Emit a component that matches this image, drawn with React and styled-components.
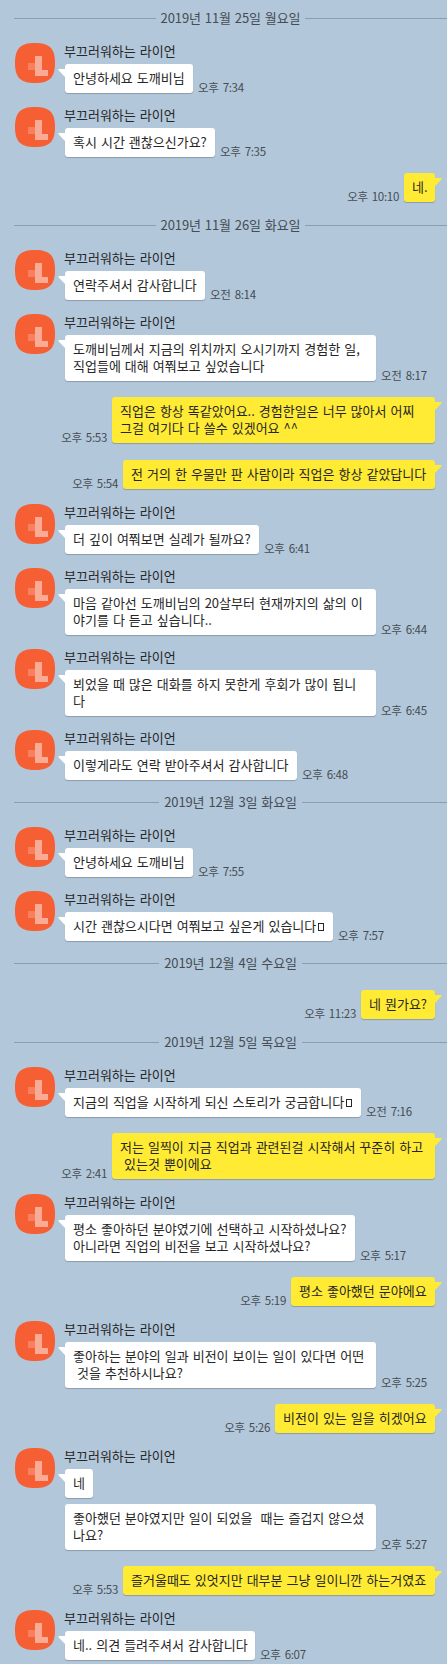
import React from "react";
import { styled, createGlobalStyle } from "styled-components";

const GlobalStyle = createGlobalStyle`
  body {
    margin: 0;
    background-color: #b2c7da;
    font-family: "Noto Sans CJK KR", sans-serif;
  }
`;

const ChatRoom = styled.div`
  box-sizing: border-box;
  width: 447px;
  height: 1664px;
  padding-top: 10px;
  overflow: hidden;
  background-color: #b2c7da;
  color: #262626;
  font-size: 13px;
  line-height: 17px;
  word-spacing: 1.1px;
`;

const DateLine = styled.div`
  display: flex;
  align-items: center;
  gap: 5px;
  height: 17px;
  margin: 0 0 16px 14px;
  color: #464c52;
  letter-spacing: -0.1px;
  white-space: pre;

  > span {
    padding-bottom: 2px;
  }

  &::before,
  &::after {
    content: "";
    flex: 1;
    height: 1px;
    background-color: #8b9eae;
  }
`;

const OtherRow = styled.div`
  display: flex;
  padding: 0 0 14px 15px;
`;

const MyRow = styled.div`
  display: flex;
  justify-content: flex-end;
  align-items: flex-end;
  gap: 5px;
  padding: 2px 12px 15px 0;
`;

const Avatar = styled.svg`
  flex: none;
  width: 40px;
  height: 40px;
  margin-right: 10px;
`;

const Content = styled.div`
  display: flex;
  flex-direction: column;
  gap: 6px;
`;

const UserName = styled.div`
  height: 15px;
  margin-left: -1px;
  line-height: 15px;
`;

const BubbleLine = styled.div`
  display: flex;
  align-items: flex-end;
  gap: 5px;
`;

const Bubble = styled.div`
  position: relative;
  box-sizing: border-box;
  flex: none;
  width: ${(props) => props.$width}px;
  padding: 5px 8px 7px;
  border-radius: 3px;
  background-color: ${(props) => (props.$mine ? "#ffeb33" : "#ffffff")};
  box-shadow: 0 1px 1px #00000038;
  white-space: pre;
`;

const Tail = styled.svg`
  position: absolute;
  top: 5px;
  ${(props) => (props.$mine ? "right: -7px;" : "left: -7px;")}
  width: 8px;
  height: 9px;
`;

const Time = styled.div`
  height: 13px;
  line-height: 15px;
  font-size: 11.5px;
  letter-spacing: -0.3px;
  word-spacing: 1.8px;
  color: #464c52;
  white-space: pre;
`;

// character the chat font has no glyph for
const EmptyGlyph = styled.span`
  display: inline-block;
  box-sizing: border-box;
  width: 6px;
  height: 8px;
  margin-left: 2px;
  border: 1px solid #262626;
`;

const name = "부끄러워하는 라이언";

const days = [
  {
    date: "2019년 11월 25일 월요일",
    talks: [
      { time: "오후 7:34", list: [["안녕하세요 도깨비님", 128]] },
      { time: "오후 7:35", list: [["혹시 시간 괜찮으신가요?", 150]] },
      { mine: true, time: "오후 10:10", list: [["네.", 31]] },
    ],
  },
  {
    date: "2019년 11월 26일 화요일",
    talks: [
      { time: "오전 8:14", list: [["연락주셔서 감사합니다", 140]] },
      {
        time: "오전 8:17",
        list: [["도깨비님께서 지금의 위치까지 오시기까지 경험한 일,\n직업들에 대해 여쭤보고 싶었습니다", 311]],
      },
      {
        mine: true,
        time: "오후 5:53",
        list: [["직업은 항상 똑같았어요.. 경험한일은 너무 많아서 어찌\n그걸 여기다 다 쓸수 있겠어요 ^^", 323]],
      },
      {
        mine: true,
        time: "오후 5:54",
        list: [["전 거의 한 우물만 판 사람이라 직업은 항상 같았답니다", 312]],
      },
      { time: "오후 6:41", list: [["더 깊이 여쭤보면 실례가 될까요?", 194]] },
      {
        time: "오후 6:44",
        list: [["마음 같아선 도깨비님의 20살부터 현재까지의 삶의 이\n야기를 다 듣고 싶습니다..", 311]],
      },
      {
        time: "오후 6:45",
        list: [["뵈었을 때 많은 대화를 하지 못한게 후회가 많이 됩니\n다", 311]],
      },
      { time: "오후 6:48", list: [["이렇게라도 연락 받아주셔서 감사합니다", 232]] },
    ],
  },
  {
    date: "2019년 12월 3일 화요일",
    talks: [
      { time: "오후 7:55", list: [["안녕하세요 도깨비님", 128]] },
      {
        time: "오후 7:57",
        emptyGlyph: true,
        list: [["시간 괜찮으시다면 여쭤보고 싶은게 있습니다", 268]],
      },
    ],
  },
  {
    date: "2019년 12월 4일 수요일",
    talks: [{ mine: true, time: "오후 11:23", list: [["네 뭔가요?", 74]] }],
  },
  {
    date: "2019년 12월 5일 목요일",
    talks: [
      {
        time: "오전 7:16",
        emptyGlyph: true,
        list: [["지금의 직업을 시작하게 되신 스토리가 궁금합니다", 296]],
      },
      {
        mine: true,
        time: "오후 2:41",
        list: [["저는 일찍이 지금 직업과 관련된걸 시작해서 꾸준히 하고\n 있는것 뿐이에요", 323]],
      },
      {
        time: "오후 5:17",
        list: [["평소 좋아하던 분야였기에 선택하고 시작하셨나요?\n아니라면 직업의 비전을 보고 시작하셨나요?", 290]],
      },
      { mine: true, time: "오후 5:19", list: [["평소 좋아했던 문야에요", 144]] },
      {
        time: "오후 5:25",
        list: [["좋아하는 분야의 일과 비전이 보이는 일이 있다면 어떤\n 것을 추천하시나요?", 311]],
      },
      { mine: true, time: "오후 5:26", list: [["비전이 있는 일을 히겠어요", 160]] },
      {
        time: "오후 5:27",
        list: [
          ["네", 28],
          ["좋아했던 분야였지만 일이 되었을  때는 즐겁지 않으셨\n나요?", 311],
        ],
      },
      {
        mine: true,
        time: "오후 5:53",
        list: [["즐거울때도 있엇지만 대부분 그냥 일이니깐 하는거였죠", 312]],
      },
      { time: "오후 6:07", list: [["네.. 의견 들려주셔서 감사합니다", 190]] },
    ],
  },
];

function Profile() {
  return (
    <Avatar viewBox="0 0 40 40">
      <path
        d="M20 0C34.5 0 40 5.500 40 20S34.500 40 20 40S0 34.500 0 20S5.500 0 20 0Z"
        fill="#f55f33"
      />
      <path d="M13 20h7v7h-7z" fill="#f7805f" />
      <path d="M20 13h7v14h6v6H20z" fill="#f9ab95" />
    </Avatar>
  );
}

function BubbleTail({ mine }) {
  return (
    <Tail $mine={mine} viewBox="0 0 8 9">
      {mine ? (
        <path d="M0 0H7.500Q8 0.800 7 1.800L1 8H0Z" fill="#ffeb33" />
      ) : (
        <path d="M8 0H0.500Q0 0.800 1 1.800L7 8H8Z" fill="#ffffff" />
      )}
    </Tail>
  );
}

function Talk({ talk }) {
  if (talk.mine) {
    return (
      <MyRow>
        <Time>{talk.time}</Time>
        <Bubble $mine $width={talk.list[0][1]}>
          {talk.list[0][0]}
          <BubbleTail mine />
        </Bubble>
      </MyRow>
    );
  }

  return (
    <OtherRow>
      <Profile />
      <Content>
        <UserName>{name}</UserName>
        {talk.list.map(([text, width], i) => (
          <BubbleLine key={i}>
            <Bubble $width={width}>
              {text}
              {talk.emptyGlyph && <EmptyGlyph />}
              {i === 0 && <BubbleTail />}
            </Bubble>
            {i === talk.list.length - 1 && <Time>{talk.time}</Time>}
          </BubbleLine>
        ))}
      </Content>
    </OtherRow>
  );
}

export default function App() {
  return (
    <>
      <GlobalStyle />
      <ChatRoom>
        {days.map((day) => (
          <div key={day.date}>
            <DateLine>
              <span>{day.date}</span>
            </DateLine>
            {day.talks.map((talk, i) => (
              <Talk key={i} talk={talk} />
            ))}
          </div>
        ))}
      </ChatRoom>
    </>
  );
}
